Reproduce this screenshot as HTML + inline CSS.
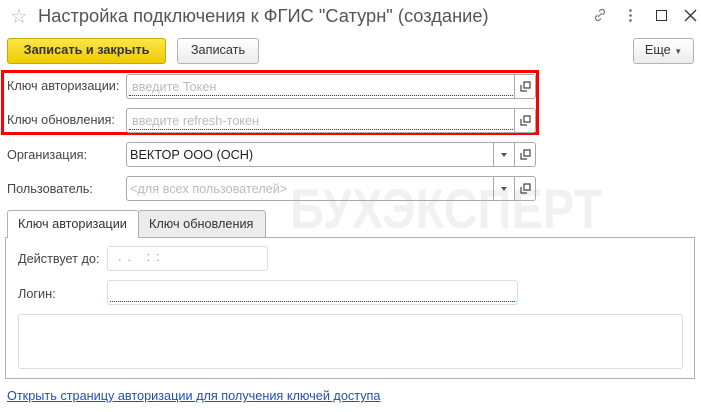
<!DOCTYPE html>
<html><head><meta charset="utf-8"><style>
*{box-sizing:border-box;margin:0;padding:0}
body{width:701px;height:412px;background:#fff;font-family:"Liberation Sans",Arial,sans-serif;font-size:12.7px;color:#333;position:relative;overflow:hidden}
.a{position:absolute}
.wm{position:absolute;left:290px;top:176px;font-size:56px;font-weight:bold;color:#f1f1f3;white-space:nowrap;transform:scaleX(0.84);transform-origin:left}
.inp{position:absolute;border:1px solid #aaa;border-radius:3px;background:#fff}
.ph{color:#bbb}
.lbl{position:absolute;left:7px;color:#444}
.btn{position:absolute;border:1px solid #b3b3b3;border-radius:3px;background:linear-gradient(#fff,#ececec);text-align:center;line-height:23px}
.sq{position:absolute;width:21px;border-left:1px solid #aaa;top:0;bottom:0}
.sq svg{position:absolute;left:5px;top:6px}
.dd{position:absolute;width:21px;border-left:1px solid #aaa;top:0;bottom:0}
.dd:after{content:"";position:absolute;left:7px;top:10px;border:3px solid transparent;border-top:4px solid #555}
.redu{position:absolute;left:2px;right:22px;bottom:2px;border-bottom:1px dotted #e00}
</style></head><body>
<div class="wm">БУХЭКСПЕРТ</div>
<div class="a" style="left:10px;top:4px;font-size:20px;color:#bbb">☆</div>
<div class="a" style="left:38px;top:5px;font-size:18.3px;color:#555">Настройка подключения к ФГИС "Сатурн" (создание)</div>
<svg class="a" style="left:592px;top:7px" width="16" height="16" viewBox="0 0 16 16" fill="none" stroke="#777" stroke-width="1.2"><path d="M7 4.5l1.5-1.5a2.5 2.5 0 013.5 3.5L10.5 8M9 11.5L7.5 13a2.5 2.5 0 01-3.5-3.5L5.5 8M6 10l4-4"/></svg>
<div class="a" style="left:629px;top:8px;width:3px;height:14px;background:radial-gradient(circle,#777 1.2px,transparent 1.5px) 0 0/3px 5px"></div>
<div class="a" style="left:656px;top:10px;width:11px;height:11px;border:1.5px solid #333"></div>
<svg class="a" style="left:684px;top:9px" width="13" height="13"><path d="M1 1L12 12M12 1L1 12" stroke="#333" stroke-width="1.3"/></svg>

<div class="btn" style="left:7px;top:38px;width:159px;height:26px;background:linear-gradient(#fbe64a,#f0cb00);border-color:#c9a800;font-weight:bold;color:#333">Записать и закрыть</div>
<div class="btn" style="left:177px;top:38px;width:82px;height:26px">Записать</div>
<div class="btn" style="left:633px;top:38px;width:61px;height:26px">Еще <span style="font-size:8px;color:#555">▼</span></div>

<div class="a" style="left:1px;top:70px;width:538px;height:65px;border:3px solid #f00"></div>
<div class="lbl" style="top:79px">Ключ авторизации:</div>
<div class="inp" style="left:126px;top:74px;width:410px;height:25px"><span class="ph a" style="left:5px;top:5px">введите Токен</span><div class="redu"></div><div class="sq" style="right:0"><svg width="11" height="11"><path d="M1 4v6h6M4 1h6v6H4z" stroke="#444" fill="none" stroke-width="1.2"/></svg></div></div>
<div class="lbl" style="top:113px">Ключ обновления:</div>
<div class="inp" style="left:126px;top:108px;width:410px;height:25px"><span class="ph a" style="left:5px;top:5px">введите refresh-токен</span><div class="redu"></div><div class="sq" style="right:0"><svg width="11" height="11"><path d="M1 4v6h6M4 1h6v6H4z" stroke="#444" fill="none" stroke-width="1.2"/></svg></div></div>

<div class="lbl" style="top:148px">Организация:</div>
<div class="inp" style="left:126px;top:142px;width:410px;height:25px"><span class="a" style="left:3px;top:5px;color:#222">ВЕКТОР ООО (ОСН)</span><div class="dd" style="right:21px"></div><div class="sq" style="right:0"><svg width="11" height="11"><path d="M1 4v6h6M4 1h6v6H4z" stroke="#444" fill="none" stroke-width="1.2"/></svg></div></div>
<div class="lbl" style="top:182px">Пользователь:</div>
<div class="inp" style="left:126px;top:176px;width:410px;height:25px;background:transparent"><span class="ph a" style="left:3px;top:5px">&lt;для всех пользователей&gt;</span><div class="dd" style="right:21px"></div><div class="sq" style="right:0"><svg width="11" height="11"><path d="M1 4v6h6M4 1h6v6H4z" stroke="#444" fill="none" stroke-width="1.2"/></svg></div></div>

<div class="a" style="left:5px;top:237px;width:690px;height:142px;border:1px solid #b0b0b0"></div>
<div class="a" style="left:138px;top:210px;width:128px;height:28px;border:1px solid #b0b0b0;border-radius:3px 3px 0 0;background:#ececec;padding:6px 0 0 10px;color:#333">Ключ обновления</div>
<div class="a" style="left:7px;top:210px;width:132px;height:28px;border:1px solid #b0b0b0;border-bottom:none;border-radius:3px 3px 0 0;background:#fff;padding:6px 0 0 10px;color:#333">Ключ авторизации</div>
<div class="a" style="left:18px;top:252px;color:#444">Действует до:</div>
<div class="inp" style="left:107px;top:246px;width:161px;height:25px;border-color:#ddd"><span class="a" style="left:10px;top:3px;color:#99b;letter-spacing:6px">.. ::</span></div>
<div class="a" style="left:18px;top:287px;color:#444">Логин:</div>
<div class="inp" style="left:107px;top:280px;width:411px;height:25px;border-color:#ddd"><div class="redu" style="right:2px"></div></div>
<div class="inp" style="left:18px;top:314px;width:665px;height:55px;border-color:#ddd"></div>
<div class="a" style="left:7px;top:389px;color:#1f4fb5;text-decoration:underline">Открыть страницу авторизации для получения ключей доступа</div>
</body></html>
